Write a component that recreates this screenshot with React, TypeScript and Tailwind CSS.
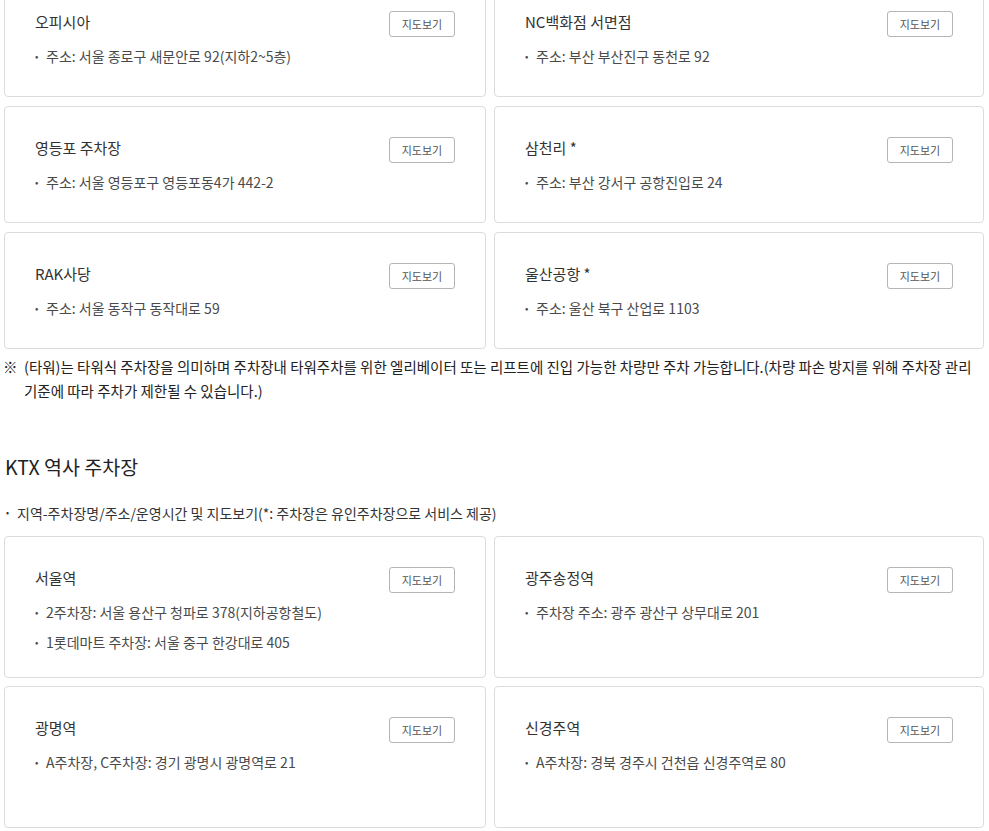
import React from 'react'

type Lot = { name: string; lines: string[] }

const partnerLots: Lot[] = [
  { name: '오피시아', lines: ['주소: 서울 종로구 새문안로 92(지하2~5층)'] },
  { name: 'NC백화점 서면점', lines: ['주소: 부산 부산진구 동천로 92'] },
  { name: '영등포 주차장', lines: ['주소: 서울 영등포구 영등포동4가 442-2'] },
  { name: '삼천리 *', lines: ['주소: 부산 강서구 공항진입로 24'] },
  { name: 'RAK사당', lines: ['주소: 서울 동작구 동작대로 59'] },
  { name: '울산공항 *', lines: ['주소: 울산 북구 산업로 1103'] },
]

const ktxLots: Lot[] = [
  { name: '서울역', lines: ['2주차장: 서울 용산구 청파로 378(지하공항철도)', '1롯데마트 주차장: 서울 중구 한강대로 405'] },
  { name: '광주송정역', lines: ['주차장 주소: 광주 광산구 상무대로 201'] },
  { name: '광명역', lines: ['A주차장, C주차장: 경기 광명시 광명역로 21'] },
  { name: '신경주역', lines: ['A주차장: 경북 경주시 건천읍 신경주역로 80'] },
]

function LotCard({ lot, tall }: { lot: Lot; tall?: boolean }) {
  return (
    <div className={`border border-[#dcdcdc] rounded-[4px] bg-white pl-[30px] pr-[30px] pt-[30px] ${tall ? 'h-[142px]' : 'h-[117px]'}`}>
      <div className="flex items-start justify-between">
        <p className="text-[15px] leading-[22px] text-[#333]">{lot.name}</p>
        <button className="w-[66px] h-[26px] border border-[#b5b5b5] rounded-[3px] text-[11px] text-[#555] bg-white">
          지도보기
        </button>
      </div>
      <ul className="mt-[9px] space-y-[10px]">
        {lot.lines.map(line => (
          <li key={line} className="flex text-[14px] leading-[20px] text-[#4a4a4a]">
            <span className="w-[11px] shrink-0 text-[10px]">•</span>
            <span>{line}</span>
          </li>
        ))}
      </ul>
    </div>
  )
}

export default function App() {
  return (
    <div className="w-[989px] h-[831px] overflow-hidden bg-white" style={{ fontFamily: '"Noto Sans CJK KR", "Noto Sans", sans-serif' }}>
      <div className="-mt-[20px]">
        <div className="grid grid-cols-[482px_490px] gap-x-[8px] gap-y-[9px] pl-[4px]">
          {partnerLots.map(lot => <LotCard key={lot.name} lot={lot} />)}
        </div>

        <p className="mt-[6px] pl-[3px] pr-[4px] flex break-keep text-[14.5px] leading-[24px] text-[#222]">
          <span className="w-[21px] shrink-0">※</span>
          <span>
            (타워)는 타워식 주차장을 의미하며 주차장내 타워주차를 위한 엘리베이터 또는 리프트에 진입 가능한 차량만 주차 가능합니다.(차량 파손 방지를 위해 주차장 관리 기준에 따라 주차가 제한될 수 있습니다.)
          </span>
        </p>

        <h2 className="mt-[51px] pl-[5px] text-[19.5px] leading-[26px] text-[#222]">KTX 역사 주차장</h2>

        <p className="mt-[23px] pl-[6px] flex text-[14px] leading-[20px] text-[#333]">
          <span className="w-[11px] text-[9px]">•</span>
          <span>지역-주차장명/주소/운영시간 및 지도보기(*: 주차장은 유인주차장으로 서비스 제공)</span>
        </p>

        <div className="mt-[13px] grid grid-cols-[482px_490px] gap-x-[8px] gap-y-[8px] pl-[4px]">
          {ktxLots.map(lot => <LotCard key={lot.name} lot={lot} tall />)}
        </div>
      </div>
    </div>
  )
}
